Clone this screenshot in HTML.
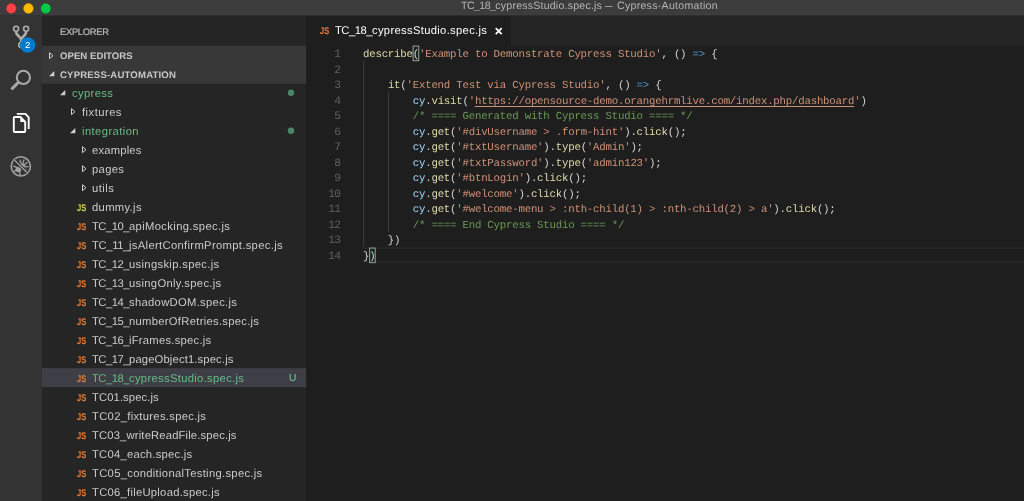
<!DOCTYPE html>
<html><head><meta charset="utf-8"><title>TC_18_cypressStudio.spec.js — Cypress-Automation</title>
<style>
html,body{margin:0;padding:0;width:1024px;height:501px;overflow:hidden;background:#1e1e1e;}
body{position:relative;will-change:transform;font-family:"Liberation Sans",sans-serif;color:#ccc;}
#bg{position:absolute;left:0;top:0}
.abs{position:absolute;white-space:pre;transform:translateY(var(--f,0px)) skewX(0.03deg)}
.tt{top:-2px;font-size:10.6px;line-height:14px;color:#b6b6b6}
#exp{left:59.9px;top:22px;font-size:9.4px;line-height:19px;color:#bbb;letter-spacing:-0.3px;-webkit-text-stroke:0.2px}
.hd{left:60.1px;font-size:9.6px;font-weight:bold;line-height:19px;color:#c8c8c8}
.tw{position:absolute;overflow:visible}
.row{position:absolute;left:0;width:306px;height:19px}
.row .lbl{position:absolute;top:0;line-height:19px;font-size:11.25px;color:#cbcbcb;white-space:pre;transform:translateY(var(--f)) skewX(0.03deg)}
.row .lbl.g{color:#68bb86}
.js{position:absolute;top:0;line-height:19px;font-size:9.8px;font-weight:bold;color:#e37933;-webkit-text-stroke:0.15px;transform:translateY(var(--f,0px)) scale(0.76,1) skewX(0.05deg);transform-origin:0 13.3px}
.js.y{color:#cbcb41}
.row .u{position:absolute;left:288.9px;top:-1px;line-height:19px;font-size:10.2px;-webkit-text-stroke:0.2px;color:#68bb86;transform:translateY(var(--f)) skewX(0.03deg)}
#tabnm{left:335.0px;top:21px;line-height:19px;font-size:11.25px;color:#fff}
#ed{position:absolute;left:0;top:0;width:1024px;height:501px;font-family:"Liberation Mono",monospace;font-size:10.75px;letter-spacing:-0.234px;color:#d4d4d4}
.ln{position:absolute;left:306px;width:34.6px;text-align:right;line-height:16px;height:16px;color:#606060;white-space:pre;font-size:11.3px;letter-spacing:-0.55px;-webkit-text-stroke:0;transform:translateY(var(--f)) skewX(0.03deg)}
.cl{position:absolute;left:362.90px;line-height:16px;height:16px;white-space:pre;transform:translateY(var(--f)) skewX(0.03deg);transform-origin:0 0}
.f{color:#dcdcaa}.s{color:#ce9178}.k{color:#569cd6}.v{color:#9cdcfe}.c{color:#6a9955}
.cl u{text-decoration:underline;text-underline-offset:1.5px}
</style></head><body>
<svg id="bg" width="1024" height="501" viewBox="0 0 1024 501">
<rect x="0.00" y="0.00" width="1024.00" height="501.00" fill="#1e1e1e"/>
<rect x="306.10" y="15.50" width="717.90" height="29.90" fill="#252526"/>
<rect x="306.10" y="15.50" width="204.70" height="30.90" fill="#1e1e1e"/>
<rect x="0.00" y="15.50" width="42.00" height="501.00" fill="#333333"/>
<rect x="42.00" y="15.50" width="264.10" height="501.00" fill="#252526"/>
<rect x="42.00" y="45.70" width="264.10" height="38.00" fill="#383838"/>
<rect x="42.00" y="368.10" width="264.10" height="19.00" fill="#3e3f46"/>
<rect x="0.00" y="0.00" width="1024.00" height="15.50" fill="#3c3c3c"/>
<rect x="0.00" y="13.60" width="1024.00" height="1.00" fill="#404040"/>
<rect x="363.40" y="247.50" width="1024.00" height="1.40" fill="#292929"/>
<rect x="363.40" y="261.50" width="1024.00" height="1.40" fill="#292929"/>
<rect x="363.25" y="61.14" width="0.90" height="186.42" fill="#404040"/>
<rect x="387.96" y="92.21" width="0.90" height="139.81" fill="#404040"/>
<rect x="413.13" y="46.10" width="5.6" height="14.6" fill="#12281a" stroke="#9a9a9a" stroke-width="1.05"/>
<rect x="369.62" y="248.06" width="5.6" height="14.6" fill="#12281a" stroke="#9a9a9a" stroke-width="1.05"/>
<circle cx="11.25" cy="8.45" r="4.85" fill="#ff4245" stroke="#e22c33" stroke-width="0.5"/>
<circle cx="28.45" cy="8.45" r="4.85" fill="#fdbb00" stroke="#e3a600" stroke-width="0.5"/>
<circle cx="45.75" cy="8.45" r="4.85" fill="#00cb48" stroke="#00b23c" stroke-width="0.5"/>
<g fill="none" stroke="#acacac" stroke-width="1.6">
<circle cx="16.1" cy="28.8" r="2.5"/><circle cx="26.1" cy="28.8" r="2.5"/><circle cx="21.2" cy="45.1" r="2.5"/>
</g>
<path d="M16.2 31.3 L16.2 32.6 C16.2 35.6 21.2 36.4 21.2 40 L21.2 42.6 M26 31.3 L26 32.6 C26 35.6 21.2 36.4 21.2 40" fill="none" stroke="#acacac" stroke-width="2.7"/>
<circle cx="27.7" cy="45" r="7.8" fill="#007acc"/>
<text x="27.7" y="48.3" font-family="Liberation Sans, sans-serif" font-size="9.7" fill="#fff" text-anchor="middle">2</text>
<circle cx="23.4" cy="77.4" r="6.6" fill="none" stroke="#a9a9a9" stroke-width="2.1"/>
<path d="M18.4 82.4 L11.4 89.4" stroke="#a9a9a9" stroke-width="3" fill="none"/>
<g fill="none" stroke="#fff" stroke-width="1.9" stroke-linejoin="round">
<path d="M20.5 117 L14.6 117 Q13.8 117 13.8 117.8 L13.8 131.2 Q13.8 132 14.6 132 L24.4 132 Q25.2 132 25.2 131.2 L25.2 121.8 Z"/>
<path d="M16.8 113.9 L25.4 113.9 L28.7 117.4 L28.7 129"/>
</g>
<path d="M20.3 117 L20.3 122 L25.2 122 Z" fill="#fff"/>
<g stroke="#a2a2a2" fill="none">
<circle cx="20.8" cy="166.4" r="9.6" stroke-width="1.6"/>
<g stroke-width="1.3" stroke-linecap="round">
<path d="M21.6 165.2 L20.0 160.2"/><path d="M22.6 164.6 L24.0 159.8"/><path d="M23.6 165.4 L27.0 162.6"/><path d="M24 166.8 L28.2 166.6"/><path d="M23.4 168 L26.6 170.2"/>
<path d="M17.4 167.6 L13.6 166.2"/><path d="M16.6 170 L13.6 171.6"/><path d="M19.4 172 L20.4 174.8"/>
</g>
</g>
<ellipse cx="18.4" cy="169.6" rx="2.9" ry="2.7" fill="#a2a2a2"/>
<ellipse cx="22.8" cy="165.6" rx="2.3" ry="2.1" fill="#a2a2a2"/>
<path d="M14.2 159.8 L27.4 173" stroke="#333" stroke-width="3.3" fill="none"/>
<path d="M14.2 159.8 L27.4 173" stroke="#a2a2a2" stroke-width="1.3" fill="none"/>
<path d="M495.7 28.2 L501.7 34.2 M501.7 28.2 L495.7 34.2" stroke="#fff" stroke-width="1.7" fill="none"/>
</svg>
<span class="abs tt" style="left:461px"><span style="letter-spacing:-0.566px">TC_18_</span><span style="letter-spacing:0.207px">cypressStudio.spec.js </span></span><span class="abs tt" style="left:605.2px;transform:scaleX(.71) skewX(0.03deg);transform-origin:0 0">— </span><span class="abs tt" style="left:617.0px;letter-spacing:0.272px">Cypress-Automation</span>
<span id="exp" class="abs">EXPLORER</span>
<svg class="tw" style="left:48.80px;top:51.70px" width="6" height="9" viewBox="0 0 6 9"><path d="M0.5 0.7 L4.0 3.7 L0.5 6.7 Z" fill="none" stroke="#d0d0d0" stroke-width="1"/></svg><span class="abs hd" style="top:46px;letter-spacing:0.03px">OPEN EDITORS</span>
<svg class="tw" style="left:48.70px;top:71.00px" width="6" height="6" viewBox="0 0 6 6"><path d="M5.3 0 L5.3 5.2 L0 5.2 Z" fill="#d0d0d0"/></svg><span class="abs hd" style="top:65px;letter-spacing:0.16px">CYPRESS-AUTOMATION</span>
<div class="row" style="top:84px;--f:0.00px"><svg class="tw" style="left:59.90px;top:5.70px" width="6" height="6" viewBox="0 0 6 6"><path d="M5.3 0 L5.3 5.2 L0 5.2 Z" fill="#d0d0d0"/></svg><span class="lbl g" style="left:71.6px"><span style="letter-spacing:0.372px">cypress</span></span><svg class="tw" style="left:287px;top:5.70px" width="8" height="8" viewBox="0 0 8 8"><circle cx="4" cy="2.8" r="3.2" fill="#498665"/></svg></div>
<div class="row" style="top:103px;--f:0.00px"><svg class="tw" style="left:70.90px;top:4.96px" width="6" height="9" viewBox="0 0 6 9"><path d="M0.5 0.7 L4.0 3.7 L0.5 6.7 Z" fill="none" stroke="#d0d0d0" stroke-width="1"/></svg><span class="lbl" style="left:81.8px"><span style="letter-spacing:0.462px">fixtures</span></span></div>
<div class="row" style="top:122px;--f:0.00px"><svg class="tw" style="left:70.30px;top:5.62px" width="6" height="6" viewBox="0 0 6 6"><path d="M5.3 0 L5.3 5.2 L0 5.2 Z" fill="#d0d0d0"/></svg><span class="lbl g" style="left:81.8px"><span style="letter-spacing:0.405px">integration</span></span><svg class="tw" style="left:287px;top:5.62px" width="8" height="8" viewBox="0 0 8 8"><circle cx="4" cy="2.8" r="3.2" fill="#498665"/></svg></div>
<div class="row" style="top:141px;--f:0.00px"><svg class="tw" style="left:81.50px;top:4.88px" width="6" height="9" viewBox="0 0 6 9"><path d="M0.5 0.7 L4.0 3.7 L0.5 6.7 Z" fill="none" stroke="#d0d0d0" stroke-width="1"/></svg><span class="lbl" style="left:92.2px"><span style="letter-spacing:0.178px">examples</span></span></div>
<div class="row" style="top:160px;--f:0.00px"><svg class="tw" style="left:81.50px;top:4.84px" width="6" height="9" viewBox="0 0 6 9"><path d="M0.5 0.7 L4.0 3.7 L0.5 6.7 Z" fill="none" stroke="#d0d0d0" stroke-width="1"/></svg><span class="lbl" style="left:92.2px"><span style="letter-spacing:0.336px">pages</span></span></div>
<div class="row" style="top:179px;--f:0.00px"><svg class="tw" style="left:81.50px;top:4.80px" width="6" height="9" viewBox="0 0 6 9"><path d="M0.5 0.7 L4.0 3.7 L0.5 6.7 Z" fill="none" stroke="#d0d0d0" stroke-width="1"/></svg><span class="lbl" style="left:92.2px"><span style="letter-spacing:0.471px">utils</span></span></div>
<div class="row" style="top:198px;--f:0.00px"><b class="js y" style="left:77.2px">JS</b><span class="lbl" style="left:92.2px"><span style="letter-spacing:0.315px">dummy.js</span></span></div>
<div class="row" style="top:217px;--f:0.00px"><b class="js" style="left:77.2px">JS</b><span class="lbl" style="left:92.2px"><span style="letter-spacing:-0.505px">TC_10_</span><span style="letter-spacing:0.344px">apiMocking.spec.js</span></span></div>
<div class="row" style="top:236px;--f:0.00px"><b class="js" style="left:77.2px">JS</b><span class="lbl" style="left:92.2px"><span style="letter-spacing:-0.367px">TC_11_</span><span style="letter-spacing:0.317px">jsAlertConfirmPrompt.spec.js</span></span></div>
<div class="row" style="top:255px;--f:0.00px"><b class="js" style="left:77.2px">JS</b><span class="lbl" style="left:92.2px"><span style="letter-spacing:-0.505px">TC_12_</span><span style="letter-spacing:0.316px">usingskip.spec.js</span></span></div>
<div class="row" style="top:274px;--f:0.00px"><b class="js" style="left:77.2px">JS</b><span class="lbl" style="left:92.2px"><span style="letter-spacing:-0.505px">TC_13_</span><span style="letter-spacing:0.304px">usingOnly.spec.js</span></span></div>
<div class="row" style="top:293px;--f:0.00px"><b class="js" style="left:77.2px">JS</b><span class="lbl" style="left:92.2px"><span style="letter-spacing:-0.505px">TC_14_</span><span style="letter-spacing:0.296px">shadowDOM.spec.js</span></span></div>
<div class="row" style="top:312px;--f:0.00px"><b class="js" style="left:77.2px">JS</b><span class="lbl" style="left:92.2px"><span style="letter-spacing:-0.505px">TC_15_</span><span style="letter-spacing:0.282px">numberOfRetries.spec.js</span></span></div>
<div class="row" style="top:331px;--f:0.00px"><b class="js" style="left:77.2px">JS</b><span class="lbl" style="left:92.2px"><span style="letter-spacing:-0.505px">TC_16_</span><span style="letter-spacing:0.244px">iFrames.spec.js</span></span></div>
<div class="row" style="top:350px;--f:0.00px"><b class="js" style="left:77.2px">JS</b><span class="lbl" style="left:92.2px"><span style="letter-spacing:-0.505px">TC_17_</span><span style="letter-spacing:0.137px">pageObject1.spec.js</span></span></div>
<div class="row" style="top:369px;--f:0.00px"><b class="js" style="left:77.2px">JS</b><span class="lbl g" style="left:92.2px"><span style="letter-spacing:-0.505px">TC_18_</span><span style="letter-spacing:0.309px">cypressStudio.spec.js</span></span><span class="u">U</span></div>
<div class="row" style="top:388px;--f:0.00px"><b class="js" style="left:77.2px">JS</b><span class="lbl" style="left:92.2px"><span style="letter-spacing:0.095px">TC01.spec.js</span></span></div>
<div class="row" style="top:407px;--f:0.00px"><b class="js" style="left:77.2px">JS</b><span class="lbl" style="left:92.2px"><span style="letter-spacing:0.291px">TC02_fixtures.spec.js</span></span></div>
<div class="row" style="top:426px;--f:0.00px"><b class="js" style="left:77.2px">JS</b><span class="lbl" style="left:92.2px"><span style="letter-spacing:0.152px">TC03_writeReadFile.spec.js</span></span></div>
<div class="row" style="top:445px;--f:0.00px"><b class="js" style="left:77.2px">JS</b><span class="lbl" style="left:92.2px"><span style="letter-spacing:0.243px">TC04_each.spec.js</span></span></div>
<div class="row" style="top:464px;--f:0.00px"><b class="js" style="left:77.2px">JS</b><span class="lbl" style="left:92.2px"><span style="letter-spacing:0.295px">TC05_conditionalTesting.spec.js</span></span></div>
<div class="row" style="top:483px;--f:0.00px"><b class="js" style="left:77.2px">JS</b><span class="lbl" style="left:92.2px"><span style="letter-spacing:0.257px">TC06_fileUpload.spec.js</span></span></div>
<b class="js" style="left:320px;top:21px">JS</b><span id="tabnm" class="abs" style="top:21px"><span style="letter-spacing:-0.505px">TC_18_</span><span style="letter-spacing:0.309px">cypressStudio.spec.js</span></span>
<div id="ed">
<div class="ln" style="top:46px;--f:0.00px">1</div><div class="cl" style="top:46px;--f:0.00px"><span class="f">describe</span>(<span class="s">'Example to Demonstrate Cypress Studio'</span>, () <span class="k">=&gt;</span> {</div>
<div class="ln" style="top:62px;--f:0.00px">2</div><div class="cl" style="top:62px;--f:0.00px"></div>
<div class="ln" style="top:77px;--f:0.00px">3</div><div class="cl" style="top:77px;--f:0.00px">    <span class="f">it</span>(<span class="s">'Extend Test via Cypress Studio'</span>, () <span class="k">=&gt;</span> {</div>
<div class="ln" style="top:93px;--f:0.00px">4</div><div class="cl" style="top:93px;--f:0.00px">        <span class="v">cy</span>.<span class="f">visit</span>(<span class="s">'<u>https://opensource-demo.orangehrmlive.com/index.php/dashboard</u>'</span>)</div>
<div class="ln" style="top:108px;--f:0.00px">5</div><div class="cl" style="top:108px;--f:0.00px">        <span class="c">/* ==== Generated with Cypress Studio ==== */</span></div>
<div class="ln" style="top:124px;--f:0.00px">6</div><div class="cl" style="top:124px;--f:0.00px">        <span class="v">cy</span>.<span class="f">get</span>(<span class="s">'#divUsername &gt; .form-hint'</span>).<span class="f">click</span>();</div>
<div class="ln" style="top:139px;--f:0.00px">7</div><div class="cl" style="top:139px;--f:0.00px">        <span class="v">cy</span>.<span class="f">get</span>(<span class="s">'#txtUsername'</span>).<span class="f">type</span>(<span class="s">'Admin'</span>);</div>
<div class="ln" style="top:155px;--f:0.00px">8</div><div class="cl" style="top:155px;--f:0.00px">        <span class="v">cy</span>.<span class="f">get</span>(<span class="s">'#txtPassword'</span>).<span class="f">type</span>(<span class="s">'admin123'</span>);</div>
<div class="ln" style="top:170px;--f:0.00px">9</div><div class="cl" style="top:170px;--f:0.00px">        <span class="v">cy</span>.<span class="f">get</span>(<span class="s">'#btnLogin'</span>).<span class="f">click</span>();</div>
<div class="ln" style="top:186px;--f:0.00px">10</div><div class="cl" style="top:186px;--f:0.00px">        <span class="v">cy</span>.<span class="f">get</span>(<span class="s">'#welcome'</span>).<span class="f">click</span>();</div>
<div class="ln" style="top:201px;--f:0.00px">11</div><div class="cl" style="top:201px;--f:0.00px">        <span class="v">cy</span>.<span class="f">get</span>(<span class="s">'#welcome-menu &gt; :nth-child(1) &gt; :nth-child(2) &gt; a'</span>).<span class="f">click</span>();</div>
<div class="ln" style="top:217px;--f:0.00px">12</div><div class="cl" style="top:217px;--f:0.00px">        <span class="c">/* ==== End Cypress Studio ==== */</span></div>
<div class="ln" style="top:232px;--f:0.00px">13</div><div class="cl" style="top:232px;--f:0.00px">    })</div>
<div class="ln" style="top:248px;--f:0.00px">14</div><div class="cl" style="top:248px;--f:0.00px">})</div>
</div>
</body></html>
